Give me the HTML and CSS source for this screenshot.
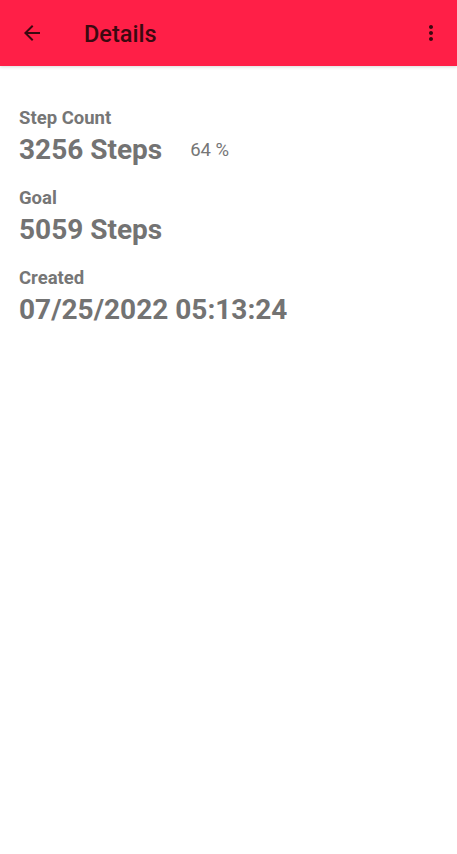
FILE: index.html
```html
<!DOCTYPE html>
<html>
<head>
<meta charset="utf-8">
<link rel="stylesheet" href="styles.css">
</head>
<body>
<header class="appbar">
  <button class="icon-btn back" aria-label="Back">
    <svg width="24" height="24" viewBox="0 0 24 24"><path d="M20 11H7.83l5.59-5.59L12 4l-8 8 8 8 1.41-1.41L7.83 13H20v-2z" fill="currentColor"/></svg>
  </button>
  <h1 class="title">Details</h1>
  <button class="icon-btn more" aria-label="More">
    <svg width="24" height="24" viewBox="0 0 24 24"><path d="M12 8c1.1 0 2-.9 2-2s-.9-2-2-2-2 .9-2 2 .9 2 2 2zm0 2c-1.1 0-2 .9-2 2s.9 2 2 2 2-.9 2-2-.9-2-2-2zm0 6c-1.1 0-2 .9-2 2s.9 2 2 2 2-.9 2-2-.9-2-2-2z" fill="currentColor"/></svg>
  </button>
</header>
<main class="content">
  <section class="field">
    <div class="label">Step Count</div>
    <div class="row">
      <span class="value">3256 Steps</span>
      <span class="pct">64 %</span>
    </div>
  </section>
  <section class="field">
    <div class="label">Goal</div>
    <div class="value">5059 Steps</div>
  </section>
  <section class="field">
    <div class="label">Created</div>
    <div class="value">07/25/2022 05:13:24</div>
  </section>
</main>
</body>
</html>
```
FILE: styles.css
```css
html, body {
  margin: 0;
  padding: 0;
  background: #ffffff;
  font-family: Roboto, "Noto Sans", sans-serif;
}
.appbar {
  height: 66px;
  background: #ff1f47;
  display: flex;
  align-items: center;
  color: #3b0910;
  box-shadow: 0 1px 3px rgba(0,0,0,0.15);
}
.icon-btn {
  background: none;
  border: 0;
  padding: 0;
  color: inherit;
  display: flex;
  align-items: center;
  justify-content: center;
  width: 24px;
  height: 24px;
}
.back {
  margin-left: 20px;
}
.title {
  margin: 2px 0 0 40px;
  font-size: 23.5px;
  font-weight: 500;
  flex: 1;
}
.more {
  margin-right: 14px;
}
.content {
  padding: 40px 19px 0 19px;
  display: flex;
  flex-direction: column;
  gap: 17px;
}
.field {
  display: flex;
  flex-direction: column;
}
.label {
  font-size: 18.5px;
  font-weight: 700;
  color: #767676;
  line-height: 24px;
}
.row {
  display: flex;
  align-items: center;
  gap: 28px;
}
.value {
  font-size: 28px;
  font-weight: 700;
  color: #737373;
  line-height: 39px;
}
.pct {
  font-size: 18.5px;
  color: #767676;
}
```
